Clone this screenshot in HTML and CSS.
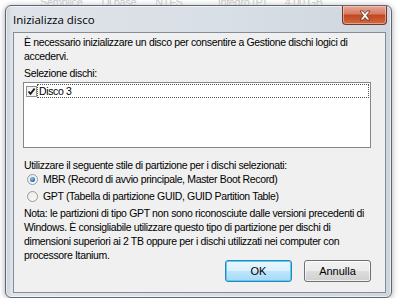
FILE: index.html
```html
<!DOCTYPE html>
<html lang="it">
<head>
    <meta charset="UTF-8">
    <title>Inizializza disco</title>
    <link rel="stylesheet" href="styles.css">
</head>
<body>
    <div class="backdrop">Semplice &nbsp; &nbsp; &nbsp; Di base &nbsp; &nbsp; &nbsp; NTFS &nbsp; &nbsp; &nbsp; &nbsp; &nbsp; &nbsp; Integro (P) &nbsp; &nbsp; &nbsp; 4,00 GB</div>
    <div class="window">
        <div class="titlebar">
            <span class="title">Inizializza disco</span>
            <div class="close">
                <svg width="14" height="11" viewBox="0 0 14 11">
                    <path d="M2 1 L5 1 L7 3.5 L9 1 L12 1 L8.6 5.5 L12 10 L9 10 L7 7.5 L5 10 L2 10 L5.4 5.5 Z" fill="#fff" stroke="#5a2a22" stroke-width="0.8" stroke-linejoin="round"/>
                </svg>
            </div>
        </div>
        <div class="client">
            <p class="intro">È necessario inizializzare un disco per consentire a Gestione dischi logici di<br>accedervi.</p>
            <div class="label">Selezione dischi:</div>
            <div class="listbox">
                <div class="item">
                    <span class="check">
                        <svg width="11" height="11" viewBox="0 0 11 11">
                            <rect x="0.5" y="0.5" width="10" height="10" fill="#f4f4f4" stroke="#8e8f8f"/>
                            <path d="M2.5 5.5 L4.5 7.8 L8.6 2.6" fill="none" stroke="#1a1a1a" stroke-width="1.8"/>
                        </svg>
                    </span>
                    <span class="item-text">Disco 3</span>
                </div>
            </div>
            <div class="label">Utilizzare il seguente stile di partizione per i dischi selezionati:</div>
            <div class="radio"><span class="dot on"></span>MBR (Record di avvio principale, Master Boot Record)</div>
            <div class="radio"><span class="dot"></span>GPT (Tabella di partizione GUID, GUID Partition Table)</div>
            <p class="note">Nota: le partizioni di tipo GPT non sono riconosciute dalle versioni precedenti di<br>Windows. È consigliabile utilizzare questo tipo di partizione per dischi di<br>dimensioni superiori ai 2 TB oppure per i dischi utilizzati nei computer con<br>processore Itanium.</p>
            <div class="buttons">
                <button class="btn default">OK</button>
                <button class="btn">Annulla</button>
            </div>
        </div>
    </div>
</body>
</html>
```

FILE: styles.css
```css
body {
    margin: 0;
    background: #fff;
    font-family: "Liberation Sans", Arial, sans-serif;
    font-size: 10.5px;
    letter-spacing: -0.35px;
    color: #000;
    overflow: hidden;
}
.backdrop {
    height: 5px;
    overflow: hidden;
    padding-left: 40px;
    line-height: 4px;
    color: #c8c8c8;
    font-size: 11px;
    white-space: nowrap;
}
.window {
    margin-left: 5px;
    width: 387px;
    height: 293px;
    padding: 0 5px 4px 7px;
    border: 1px solid #5f6770;
    border-radius: 6px;
    background: linear-gradient(to right, #c9d0d8 0px, #dfe4ea 6px, #d8dee5 60%, #cfd6de 100%);
    box-shadow: 0 1px 6px rgba(0,0,0,0.35), inset 0 0 0 1px rgba(255,255,255,0.6);
    box-sizing: border-box;
    display: flex;
    flex-direction: column;
}
.titlebar {
    height: 26px;
    display: flex;
    align-items: flex-start;
    justify-content: space-between;
    flex-shrink: 0;
}
.title {
    margin-top: 6px;
    font-family: "Open Sans", "Liberation Sans", sans-serif;
    font-size: 11.5px;
    letter-spacing: 0;
    color: #000;
}
.close {
    width: 43px;
    height: 18px;
    margin-right: -1px;
    border: 1px solid #6b3a32;
    border-top: none;
    border-radius: 0 0 4px 4px;
    background: linear-gradient(#e7a898 0%, #d77a62 45%, #c2451f 50%, #cf6a43 100%);
    box-shadow: inset 0 0 0 1px rgba(255,220,200,0.5);
    display: flex;
    align-items: center;
    justify-content: center;
}
.client {
    flex: 1;
    background: #f0f0f0;
    border: 1px solid #848c96;
    padding: 2px 14px 0 10px;
    white-space: nowrap;
}
.intro, .note {
    margin: 0;
    line-height: 14px;
}
.label {
    line-height: 14px;
    margin-top: 3px;
}
.listbox {
    margin: 2px 0 10px -1px;
    height: 66px;
    box-sizing: border-box;
    background: #fff;
    border: 1px solid #828790;
    padding: 1px 2px;
}
.item {
    display: flex;
    align-items: center;
    height: 14px;
}
.check {
    width: 12px;
    height: 11px;
    display: flex;
}
.item-text {
    flex: 1;
    height: 12px;
    line-height: 12px;
    padding-left: 1px;
    outline: 1px dotted #555;
    outline-offset: 0;
}
.radio {
    display: flex;
    align-items: center;
    height: 14px;
    margin-bottom: 3px;
    padding-left: 3px;
}
.dot {
    width: 9px;
    height: 9px;
    border-radius: 50%;
    border: 1px solid #9a9a9a;
    background: linear-gradient(135deg, #e8e8e8, #fafafa);
    margin-right: 5px;
    position: relative;
}
.dot.on::after {
    content: "";
    position: absolute;
    left: 2px;
    top: 2px;
    width: 5px;
    height: 5px;
    border-radius: 50%;
    background: radial-gradient(circle at 40% 35%, #8fd0ff, #1b5fa8 70%);
}
.note {
    margin-top: 3px;
}
.buttons {
    display: flex;
    justify-content: flex-end;
    gap: 12px;
    margin-top: -2px;
}
.btn {
    width: 67px;
    height: 22px;
    font-family: "Liberation Sans", Arial, sans-serif;
    font-size: 11px;
    color: #000;
    border: 1px solid #707070;
    border-radius: 3px;
    background: linear-gradient(#f2f2f2 0%, #ebebeb 50%, #dddddd 51%, #cfcfcf 100%);
    box-shadow: inset 0 0 0 1px rgba(255,255,255,0.7);
    padding: 0;
}
.btn.default {
    border-color: #3c7fb1;
    background: linear-gradient(#eaf6fd 0%, #d9f0fc 50%, #bee6fd 51%, #a7d9f5 100%);
    box-shadow: inset 0 0 0 1px #48d3fd;
}
```
